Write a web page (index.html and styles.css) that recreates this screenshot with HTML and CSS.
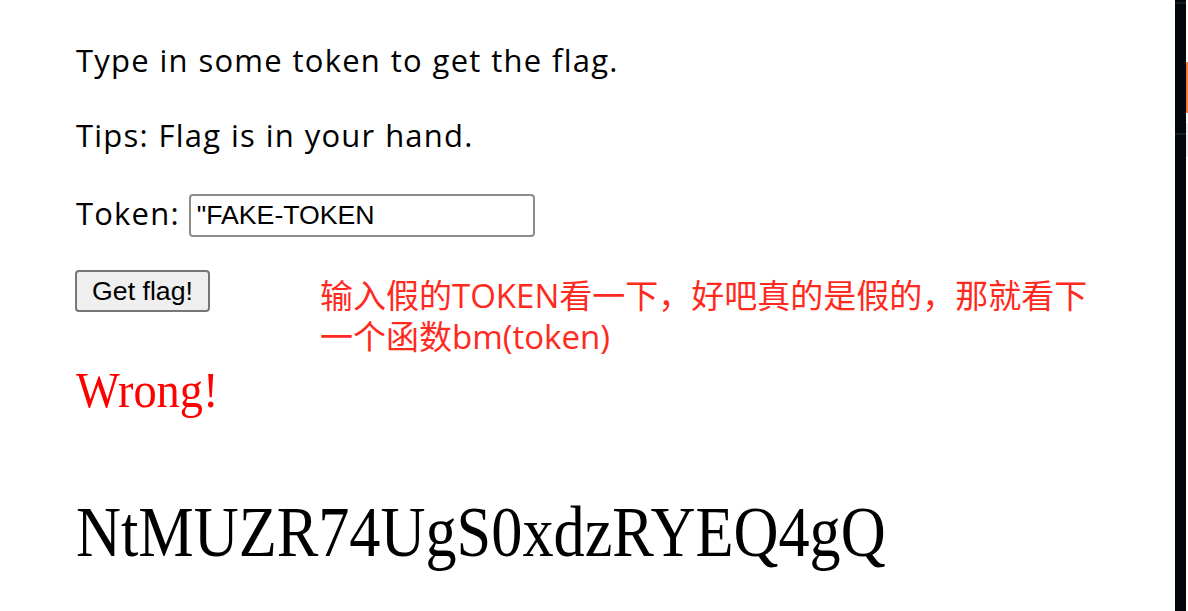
FILE: index.html
```html
<!DOCTYPE html>
<html lang="zh-CN">
<head>
<meta charset="utf-8">
<title>Get flag</title>
<link rel="stylesheet" href="styles.css">
</head>
<body>
<div class="page">
  <main class="content">
    <p class="line line-first">Type in some token to get the flag.</p>
    <p class="line line-tips">Tips: Flag is in your hand.</p>
    <form class="token-row" onsubmit="return false">
      <label class="line" for="token">Token:</label>
      <input class="token-input" id="token" type="text" value="&quot;FAKE-TOKEN">
    </form>
    <div class="action-row">
      <button class="get-btn" type="button">Get flag!</button>
      <p class="note">输入假的TOKEN看一下，好吧真的是假的，那就看下<br>一个函数bm(token)</p>
    </div>
    <h2 class="wrong"><span class="squeeze squeeze-wrong">Wrong!</span></h2>
    <h1 class="flag"><span class="squeeze squeeze-flag">NtMUZR74UgS0xdzRYEQ4gQ</span></h1>
  </main>
  <aside class="edge">
    <div class="edge-dark">
      <div class="edge-seg edge-seg-top"></div>
      <div class="edge-line"></div>
      <div class="edge-seg edge-seg-mid"></div>
      <div class="edge-line"></div>
      <div class="edge-seg edge-seg-fill"></div>
    </div>
    <div class="edge-side">
      <div class="side-gap side-gap-1"></div>
      <div class="side-orange"></div>
      <div class="side-gap side-gap-2"></div>
      <div class="side-gray"></div>
    </div>
  </aside>
</div>
</body>
</html>
```

FILE: styles.css
```css
* { box-sizing: border-box; }

html, body {
  margin: 0;
  padding: 0;
  background: #ffffff;
  height: 100%;
}

.page {
  display: flex;
  width: 1188px;
  height: 611px;
  overflow: hidden;
}

.content {
  flex: 1;
  padding: 40px 0 0 75px;
  display: flex;
  flex-direction: column;
  align-items: flex-start;
  color: #000;
}

.line {
  margin: 0 0 0 1px;
  font-family: "Open Sans", "Noto Sans", sans-serif;
  font-size: 31px;
  letter-spacing: 1.2px;
  word-spacing: 0.5px;
  line-height: 40px;
  white-space: nowrap;
}

.line-tips { margin-top: 35px; }

.token-row {
  margin: 38px 0 0 0;
  display: flex;
  align-items: flex-start;
  gap: 9px;
}

.token-input {
  width: 346px;
  height: 43px;
  margin: 1px 0 0 0;
  border: 2px solid #8d8d8d;
  border-radius: 4px;
  padding: 0 6px;
  font-family: "Liberation Sans", Arial, sans-serif;
  font-size: 26.67px;
  color: #000;
  background: #fff;
  outline: none;
}

.action-row {
  margin-top: 33px;
  display: flex;
  align-items: flex-start;
  gap: 110px;
}

.get-btn {
  width: 135px;
  height: 42px;
  margin: 0;
  padding: 0;
  border: 2px solid #767676;
  border-radius: 4px;
  background: #efefef;
  font-family: "Liberation Sans", Arial, sans-serif;
  font-size: 26.67px;
  color: #000;
}

.note {
  margin: 5px 0 0 0;
  font-family: "Open Sans", "Noto Sans CJK SC", sans-serif;
  font-size: 33px;
  line-height: 41px;
  color: #ff2a1e;
  white-space: nowrap;
}

.wrong {
  margin: 3px 0 0 1px;
  font-weight: normal;
  font-family: "Liberation Serif", "Times New Roman", serif;
  font-size: 51px;
  line-height: 60px;
  color: #ff0000;
}

.flag {
  margin: 72px 0 0 1px;
  font-weight: normal;
  font-family: "Liberation Serif", "Times New Roman", serif;
  font-size: 72px;
  line-height: 80px;
  color: #000;
  white-space: nowrap;
}

.squeeze {
  display: inline-block;
  transform-origin: left center;
}
.squeeze-wrong { transform: scaleX(0.91); }
.squeeze-flag { transform: scaleX(0.865); }

/* right edge strip */
.edge {
  flex: 0 0 13px;
  display: flex;
  height: 611px;
}

.edge-dark {
  width: 11px;
  display: flex;
  flex-direction: column;
  background: #03070c;
}
.edge-seg-top { height: 2px; }
.edge-line { height: 2px; background: #0f2024; }
.edge-seg-mid { height: 129px; }
.edge-seg-fill { flex: 1; }

.edge-side {
  width: 2px;
  display: flex;
  flex-direction: column;
  background: #ffffff;
}
.side-gap-1 { height: 62px; }
.side-orange { height: 51px; background: #f57b36; }
.side-gap-2 { height: 10px; }
.side-gray { height: 34px; background: #ececf1; }
```
